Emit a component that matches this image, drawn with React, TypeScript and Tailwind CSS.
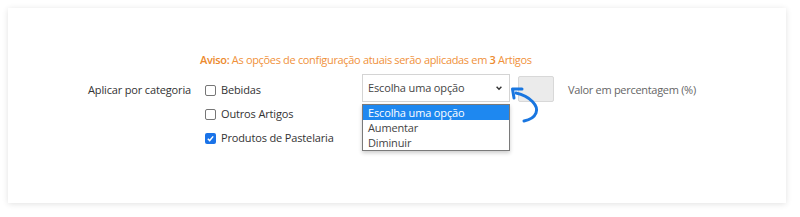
import React from "react"

const categories = [
  { name: "Bebidas", checked: false },
  { name: "Outros Artigos", checked: false },
  { name: "Produtos de Pastelaria", checked: true },
]

function Checkbox({ checked }: { checked: boolean }) {
  if (checked) {
    return (
      <span className="flex h-[11px] w-[11px] shrink-0 items-center justify-center rounded-[2px] bg-[#1a73e8]">
        <svg viewBox="0 0 10 10" className="h-[9px] w-[9px]">
          <path d="M2 5.2 L4.1 7.3 L8 2.6" fill="none" stroke="white" strokeWidth="1.6" />
        </svg>
      </span>
    )
  }
  return <span className="h-[11px] w-[11px] shrink-0 rounded-[2px] border border-[#767676] bg-white" />
}

export default function App() {
  return (
    <div className="h-[217px] w-[800px] bg-white p-2 font-['Open_Sans',sans-serif] tracking-[-0.15px]">
      <div className="h-[195px] w-[778px] bg-white pt-[44px] shadow-[0_1px_6px_rgba(0,0,0,0.12)]">
        <p className="pl-[192px] text-[11px] leading-[16px] tracking-[-0.33px] text-[#f0913a]">
          <b className="font-semibold text-[#ec8a2e]">Aviso:</b> As opções de configuração atuais serão aplicadas em{" "}
          <b className="font-semibold text-[#ec8a2e]">3</b> Artigos
        </p>

        <div className="mt-[6px] flex pl-[80px]">
          <div className="w-[117px] pt-[8px] text-[11px] leading-[16px] text-[#333]">Aplicar por categoria</div>

          <div className="flex w-[157px] flex-col gap-[8px] pt-[8px]">
            {categories.map((c) => (
              <label key={c.name} className="flex items-center gap-[5px] text-[11px] leading-[16px] text-[#333]">
                <Checkbox checked={c.checked} />
                <span>{c.name}</span>
              </label>
            ))}
          </div>

          <div className="relative">
            <div className="flex h-[28px] w-[148px] items-center justify-between border border-[#d4d4d4] bg-white pl-[5px] pr-[6px] text-[11px] text-[#444]">
              <span>Escolha uma opção</span>
              <svg viewBox="0 0 10 10" className="h-[8px] w-[8px]">
                <path d="M2 3.5 L5 6.5 L8 3.5" fill="none" stroke="#333" strokeWidth="1.8" />
              </svg>
            </div>
            <ul className="absolute left-0 top-[30px] w-[148px] border border-[#7a7a7a] bg-white text-[11px] leading-[15px] text-[#444] shadow-[0_2px_4px_rgba(0,0,0,0.2)]">
              <li className="bg-[#1e88f0] pl-[5px] text-white">Escolha uma opção</li>
              <li className="pl-[5px]">Aumentar</li>
              <li className="pl-[5px]">Diminuir</li>
            </ul>
            <svg viewBox="0 0 40 50" className="absolute left-[146px] top-[12px] h-[50px] w-[40px]">
              <path
                d="M8 7 C 22 10, 31 20, 28 27 C 26 32, 21 34, 16 35"
                fill="none"
                stroke="#1976e0"
                strokeWidth="3"
                strokeLinecap="round"
              />
              <path d="M4.5 3 L14 3 M4.5 3 L6 12" fill="none" stroke="#1976e0" strokeWidth="3" strokeLinecap="round" />
            </svg>
          </div>

          <div className="ml-[8px] mt-[2px] h-[26px] w-[36px] rounded-[2px] border border-[#d8d8d8] bg-[#ebebeb]" />

          <div className="ml-[14px] pt-[8px] text-[11px] leading-[16px] tracking-[-0.3px] text-[#666]">
            Valor em percentagem (%)
          </div>
        </div>
      </div>
    </div>
  )
}
